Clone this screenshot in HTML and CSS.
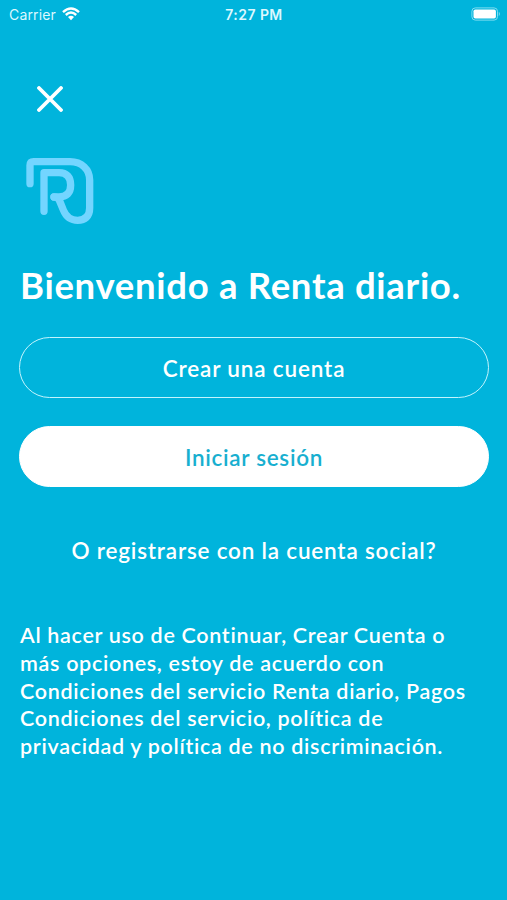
FILE: index.html
```html
<!DOCTYPE html>
<html lang="es">
  <head>
    <meta charset="UTF-8" />
    <meta name="viewport" content="width=device-width, initial-scale=1.0" />
    <title>Renta diario</title>
    <link rel="stylesheet" href="styles.css">
  </head>
  <body>
    <header class="status">
      <div class="carrier">
        <span>Carrier</span>
        <svg class="wifi" viewBox="0 0 18 14">
          <path d="M1 5.2Q9 -2.2 17 5.2M3.8 8Q9 3.2 14.2 8" />
          <path class="dot" d="M6 10.1Q9 7.4 12 10.1L9 13.2Z" />
        </svg>
      </div>
      <span class="time">7:27 PM</span>
      <svg class="battery" viewBox="0 0 30 14">
        <rect class="case" x="0.9" y="0.9" width="25.6" height="12.2" rx="3.4" />
        <rect class="level" x="2.5" y="2.5" width="22.4" height="9" rx="1.8" />
        <path class="case-tip" d="M27.8 4.8Q30 7 27.8 9.2Z" />
      </svg>
    </header>
    <main class="welcome">
      <button class="close" aria-label="Cerrar">
        <svg viewBox="0 0 26 26">
          <path d="M2 2L24 24M24 2L2 24" />
        </svg>
      </button>
      <svg class="logo" viewBox="45 258 210 207">
        <path d="M60 341V286Q60 275 71 275H180C215 275 239 298 239 330V414C239 439 225 451 203 451C181 451 168 440 160 420L149 393Q145 381 132 381" />
        <path d="M102 424V308H147C170 308 182 321 182 345C182 369 170 381 147 381H132" />
      </svg>
      <h1>Bienvenido a Renta diario.</h1>
      <button class="btn">Crear una cuenta</button>
      <button class="btn btn-login">Iniciar sesión</button>
      <p class="social">O registrarse con la cuenta social?</p>
      <p class="terms">
        Al hacer uso de Continuar, Crear Cuenta o<br />
        más opciones, estoy de acuerdo con<br />
        Condiciones del servicio Renta diario, Pagos<br />
        Condiciones del servicio, política de<br />
        privacidad y política de no discriminación.
      </p>
    </main>
  </body>
</html>
```
FILE: styles.css
```css
* {
  margin: 0;
  padding: 0;
  box-sizing: border-box;
}

body {
  height: 900px;
  background: #00b4dc;
  color: #fff;
  font-family: Lato, "Liberation Sans", sans-serif;
  overflow: hidden;
}

button {
  font-family: inherit;
  cursor: pointer;
}

svg {
  display: block;
}

.status {
  display: grid;
  grid-template-columns: 1fr auto 1fr;
  align-items: center;
  height: 27px;
  padding: 0 6px 0 9px;
  font: 14px/27px Inter, sans-serif;
  color: #dcf8ff;
}

.carrier {
  display: flex;
  align-items: center;
  gap: 6px;
  letter-spacing: 0.15px;
}

.wifi {
  width: 18px;
  height: 14px;
  fill: none;
  stroke: #fff;
  stroke-width: 2.4;
}

.wifi .dot {
  fill: #fff;
  stroke: none;
}

.time {
  padding: 1px 2px 0 0;
  font-size: 14px;
  font-weight: 600;
  letter-spacing: 0.45px;
}

.battery {
  width: 30px;
  height: 14px;
  justify-self: end;
}

.case {
  fill: none;
  stroke: #7fdcf0;
}

.level {
  fill: #fff;
}

.case-tip {
  fill: #7fdcf0;
}

.welcome {
  display: flex;
  flex-direction: column;
  padding: 59px 18px 0 19px;
}

.close {
  width: 26px;
  height: 26px;
  margin-left: 18px;
  background: none;
  border: 0;
}

.close svg {
  width: 26px;
  height: 26px;
  stroke: #fff;
  stroke-width: 3.8;
  stroke-linecap: round;
}

.logo {
  width: 70px;
  height: 69px;
  margin: 44px 0 0 6px;
  fill: none;
  stroke: #73d5ff;
  stroke-width: 22;
  stroke-linecap: round;
  stroke-linejoin: round;
}

h1 {
  height: 48px;
  margin: 37px 0 0 1px;
  font-size: 36.5px;
  line-height: 46px;
  font-weight: 700;
  letter-spacing: 0.7px;
  white-space: nowrap;
}

.btn {
  height: 61px;
  margin-top: 27px;
  padding-top: 1px;
  background: none;
  border: 1px solid #c4f4fd;
  border-radius: 31px;
  color: #fff;
  font-size: 22.5px;
  font-weight: 600;
  letter-spacing: 0.85px;
}

.btn-login {
  margin-top: 28px;
  background: #fff;
  border-color: #fff;
  color: #18afd0;
  letter-spacing: 0.7px;
}

.social {
  margin-top: 50px;
  font-size: 22.5px;
  line-height: 28px;
  font-weight: 600;
  letter-spacing: 0.8px;
  text-align: center;
}

.terms {
  margin: 57px 0 0 1px;
  font-size: 21.5px;
  line-height: 27.8px;
  font-weight: 600;
  letter-spacing: 0.69px;
  white-space: nowrap;
}
```
